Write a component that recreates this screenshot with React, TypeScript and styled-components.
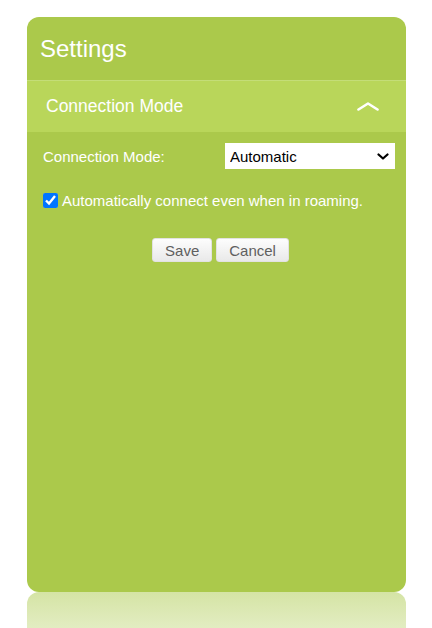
import React from "react";
import styled, { createGlobalStyle } from "styled-components";

const Global = createGlobalStyle`
  html, body { margin: 0; padding: 0; background: #ffffff; }
  body { font-family: "Liberation Sans", Arial, sans-serif; }
`;

const Page = styled.div`
  padding: 17px 0 0 27px;
  width: 379px;
`;

const Panel = styled.div`
  width: 379px;
  height: 575px;
  background: #abc94b;
  border-radius: 12px;
  overflow: hidden;
  display: flex;
  flex-direction: column;
`;

const TitleBar = styled.div`
  height: 63px;
  display: flex;
  align-items: center;
  padding-left: 13px;
`;

const Title = styled.h1`
  margin: 0;
  font-size: 24px;
  font-weight: normal;
  color: #ffffff;
  line-height: normal;
`;

const SectionHeader = styled.div`
  height: 51px;
  border-top: 1px solid #c4dd78;
  background: #b9d65a;
  display: flex;
  align-items: center;
  justify-content: space-between;
  padding: 0 27px 0 19px;
`;

const SectionTitle = styled.span`
  font-size: 17.5px;
  color: #ffffff;
  line-height: normal;
`;

const Content = styled.div`
  padding: 11px 11px 0 16px;
  display: flex;
  flex-direction: column;
`;

const FieldRow = styled.div`
  display: grid;
  grid-template-columns: 182px 170px;
  align-items: center;
`;

const Label = styled.label`
  font-size: 15px;
  color: #ffffff;
`;

const SelectWrap = styled.div`
  position: relative;
  width: 170px;
  height: 26px;
`;

const Select = styled.select`
  appearance: none;
  -webkit-appearance: none;
  width: 100%;
  height: 100%;
  border: none;
  border-radius: 0;
  background: #ffffff;
  padding: 0 24px 0 5px;
  font-family: "Liberation Sans", Arial, sans-serif;
  font-size: 15px;
  color: #000000;
  outline: none;
`;

const SelectArrow = styled.svg`
  position: absolute;
  right: 6px;
  top: 10px;
  pointer-events: none;
`;

const CheckRow = styled.label`
  margin-top: 21px;
  display: flex;
  align-items: center;
  height: 20px;
  font-size: 15px;
  color: #ffffff;
`;

const Check = styled.input`
  width: 15px;
  height: 15px;
  margin: 0 4px 0 0;
  accent-color: #0075ff;
`;

const Actions = styled.div`
  margin-top: 28px;
  display: flex;
  justify-content: center;
  gap: 4px;
  padding-left: 3px;
`;

const Button = styled.button`
  height: 24px;
  padding: 0 12px;
  border: 1px solid #e2e2e2;
  border-radius: 3px;
  background: linear-gradient(#fdfdfd, #e9e9e9);
  font-family: "Liberation Sans", Arial, sans-serif;
  font-size: 15px;
  color: #5f5f5f;
  cursor: pointer;
`;

const Reflection = styled.div`
  width: 379px;
  height: 36px;
  border-radius: 12px 12px 0 0;
  background: linear-gradient(rgba(171, 201, 75, 0.5), rgba(171, 201, 75, 0.34));
`;

export default function App() {
  return (
    <>
      <Global />
      <Page>
        <Panel>
          <TitleBar>
            <Title>Settings</Title>
          </TitleBar>
          <SectionHeader>
            <SectionTitle>Connection Mode</SectionTitle>
            <svg width="22" height="9" viewBox="0 0 22 9">
              <polyline
                points="1.5,7.5 11,1.5 20.5,7.5"
                fill="none"
                stroke="#ffffff"
                strokeWidth="2.6"
                strokeLinecap="round"
                strokeLinejoin="round"
              />
            </svg>
          </SectionHeader>
          <Content>
            <FieldRow>
              <Label htmlFor="mode">Connection Mode:</Label>
              <SelectWrap>
                <Select id="mode" defaultValue="auto">
                  <option value="auto">Automatic</option>
                  <option value="manual">Manual</option>
                </Select>
                <SelectArrow width="12" height="7" viewBox="0 0 12 7">
                  <polyline
                    points="1.5,1.5 6,5.5 10.5,1.5"
                    fill="none"
                    stroke="#000000"
                    strokeWidth="2.2"
                    strokeLinecap="round"
                    strokeLinejoin="round"
                  />
                </SelectArrow>
              </SelectWrap>
            </FieldRow>
            <CheckRow>
              <Check type="checkbox" defaultChecked />
              Automatically connect even when in roaming.
            </CheckRow>
            <Actions>
              <Button type="button">Save</Button>
              <Button type="button">Cancel</Button>
            </Actions>
          </Content>
        </Panel>
        <Reflection />
      </Page>
    </>
  );
}
